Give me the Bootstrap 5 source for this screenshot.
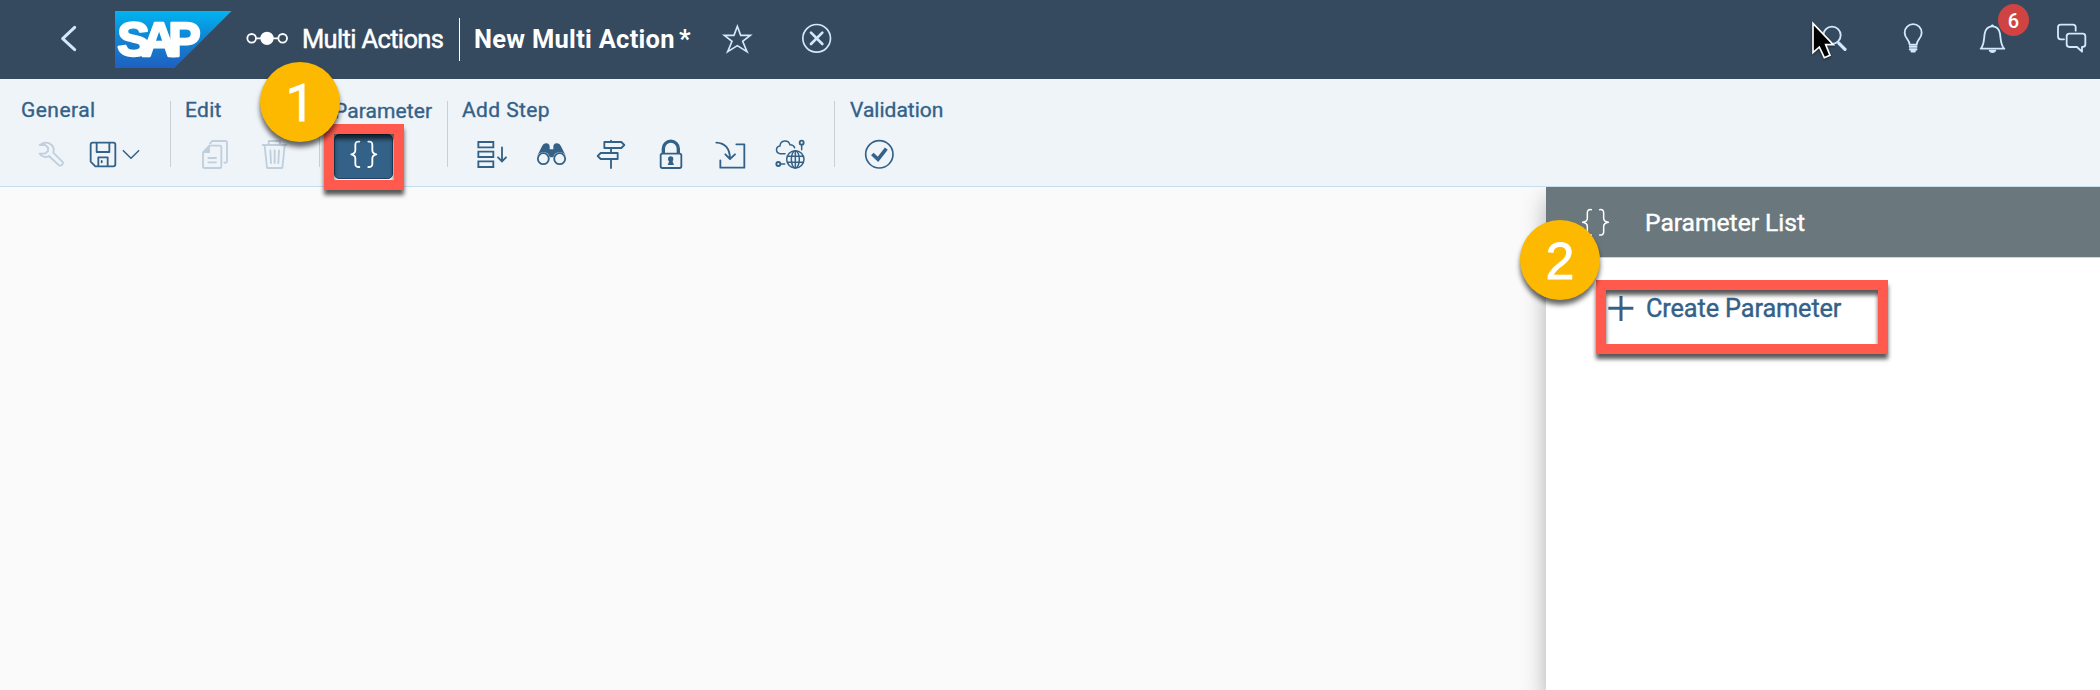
<!DOCTYPE html>
<html lang="en">
<head>
<meta charset="utf-8">
<title>Multi Actions</title>
<link href="https://cdn.jsdelivr.net/npm/bootstrap@5.3.0/dist/css/bootstrap.min.css" rel="stylesheet">
<script src="https://cdn.jsdelivr.net/npm/bootstrap@5.3.0/dist/js/bootstrap.bundle.min.js" defer></script>
<style>
body{font-family:Roboto,"Liberation Sans",sans-serif;background:#fafafa;height:690px;overflow:hidden}
svg{display:block;flex:none;overflow:visible;fill:none;stroke:currentColor;stroke-width:5.5;stroke-linejoin:round;stroke-linecap:round}
.solid{fill:currentColor;stroke:none}
.shell{height:79px;background:#354a5f;color:#d1e8ff;padding:0 14px 0 60px}
.shell-text{font-size:25.5px;line-height:79px;color:#fff;white-space:nowrap;flex:none}
.crumb{width:157px;padding-left:13px;letter-spacing:-.65px;-webkit-text-stroke:.5px #fff}
.title-now{width:247px;padding-left:13px;font-weight:700;letter-spacing:.28px}
.sep{width:1px;height:43px;background:#fff;margin-right:1px}
.logo{margin:0 14px 0 37px}
.tools{height:108px;padding-top:22px;background:#eff4f9;border-bottom:1px solid #c8dcef;color:#346187}
.grp{height:66px;border-right:1px solid #c8cfd6;padding-left:15px;flex:none}
.grp-label{font-size:21px;line-height:18px;height:18px;margin-bottom:16px;white-space:nowrap;-webkit-text-stroke:.35px}
.off{color:#bfcfde}
.work{height:503px;overflow:hidden}
.side{width:554px;background:#fff;box-shadow:0 12px 22px rgba(0,0,0,.3)}
.side-head{height:71px;background:#6a777c;border-bottom:1px solid #c8d6e4;color:#fff;padding-left:36px;flex:none}
.side-title{font-size:24.6px;line-height:72px;margin-left:36px;white-space:nowrap;-webkit-text-stroke:.45px}
.create{color:#346187;font-size:25.3px;line-height:42px;padding:30px 0 0 61px;white-space:nowrap}
.create span{-webkit-text-stroke:.4px;margin-left:12px;letter-spacing:-.12px}
.param-btn{width:59px;height:45px;background:#346187;border:1px solid #1f4668;border-radius:5px;color:#fff;margin:-1px 0 0 0}
.frame{position:absolute;border:10px solid #ff5a4d;filter:drop-shadow(0 5px 2px rgba(0,0,0,.65))}
.frame-a{left:324px;top:124px;width:80px;height:66px}
.frame-b{left:1596px;top:280px;width:292px;height:74px}
.step{position:absolute;width:80px;height:80px;border-radius:50%;background:#fcb900;color:#fff;font:52px/82px "Liberation Sans",sans-serif;text-align:center;-webkit-text-stroke:.8px #fff;box-shadow:0 5px 5px rgba(0,0,0,.6)}
.step-1{left:260px;top:62px;font-family:Roboto,sans-serif;line-height:83px}
.step-2{left:1520px;top:220px}
.count{position:absolute;left:1998px;top:4px;width:31px;height:32px;border-radius:50%;background:#d04343;color:#fff;font-size:20px;line-height:34px;text-align:center;font-weight:500}
.pointer{position:absolute;left:1808px;top:18px}
</style>
</head>
<body class="position-relative">
<header class="shell d-flex align-items-center">
  <svg width="18" height="79" viewBox="180 0 54 237"><path style="stroke-width:9" d="M224 82L188 116L224 149"/></svg>
  <svg class="logo" width="117" height="79" viewBox="345 0 351 237">
    <defs><linearGradient id="sap" x1="0" y1="0" x2="0" y2="1"><stop offset="0" stop-color="#00b5f1"/><stop offset=".4" stop-color="#0d8bd8"/><stop offset="1" stop-color="#2060c0"/></linearGradient></defs>
    <path fill="url(#sap)" stroke="none" d="M345 33H695L523 204H345z"/>
    <text x="352" y="169" textLength="250" style="font:bold 146px 'Liberation Sans',sans-serif;fill:#fff;stroke:#fff;stroke-width:7">SAP</text>
  </svg>
  <svg width="43" height="79" viewBox="738 0 129 237" color="#fff"><circle cx="755" cy="115" r="13"/><circle cx="848" cy="115" r="13"/><path d="M769 115H834"/><circle class="solid" cx="801" cy="115" r="20"/></svg>
  <div class="shell-text crumb ms-0" style="margin-right:13px">Multi Actions</div>
  <div class="sep"></div>
  <div class="shell-text title-now">New Multi Action<span class="ms-1">*</span></div>
  <svg style="margin-left:14px" width="30" height="79" viewBox="846 0 90 237"><path style="stroke-linejoin:miter;stroke-width:5" d="M892 79L902 106H931L908 124L921 155L892 137L863 155L876 124L853 106H882z"/></svg>
  <svg style="margin-left:49px" width="31" height="79" viewBox="1083 0 93 237"><circle cx="1130" cy="115" r="41.500" stroke-width="5"/><path style="stroke-width:8" d="M1113 98L1147 132M1147 98L1113 132"/></svg>
  <div class="ms-auto d-flex">
    <svg width="26" height="79" viewBox="123 0 78 237"><circle cx="156" cy="106" r="26"/><path style="stroke-width:10" d="M177 130L195 148"/></svg>
    <svg style="margin-left:56px" width="20" height="79" viewBox="369 0 60 237"><path d="M389 134C389 119 374 116 374 98A25.500 25.500 0 0 1 425 98C425 116 410 119 410 134z"/><path style="stroke-width:7" d="M390 140H409M390 148H409M395 154H404"/></svg>
    <svg style="margin-left:56px" width="26" height="79" viewBox="597 0 78 237"><path d="M602 146H673C662 137 663 123 660 101C657 84 649 79 637 79S617 84 614 101C611 123 612 137 602 146z"/><path class="solid" d="M626 149H649C647 162 628 162 626 149zM630 80Q637 65 644 80z"/></svg>
    <svg style="margin-left:52px" width="29" height="79" viewBox="831 0 87 237"><path d="M852 118H842Q834 118 834 109V82Q834 74 842 74H879Q887 74 887 82V92M868 101H908Q916 101 916 109V133Q916 141 908 141H906V155L891 141H868Q860 141 860 133V109Q860 101 868 101z"/></svg>
  </div>
</header>

<nav class="tools d-flex align-items-start">
  <section class="grp" style="width:171px;padding-left:22px">
    <div class="grp-label" style="letter-spacing:.45px;text-indent:-1px">General</div>
    <div class="d-flex">
      <svg class="off" width="60" height="40" viewBox="66 405 180 120"><path d="M119 435H135L144 443V453L135 461H119C124 470 137 474 147 468L177 496Q184 499 188 492L189 487L160 458C166 438 148 424 130 429L119 435"/></svg>
      <svg width="60" height="40" viewBox="246 405 180 120"><path d="M278 428H340Q346 428 346 434V493Q346 499 340 499H286L272 485V434Q272 428 278 428zM290 429V456H328V429M295 498V472H323V498"/><path d="M305 483V487"/><path style="stroke-width:4.500" d="M370 452L393 475L416 452"/></svg>
    </div>
  </section>
  <section class="grp" style="width:149px">
    <div class="grp-label" style="letter-spacing:.3px;text-indent:-1px">Edit</div>
    <div class="d-flex off">
      <svg width="60" height="40" viewBox="558 405 180 120"><path d="M628 437H659Q664 437 664 442V499Q664 504 659 504H614Q609 504 609 499V457zM630 430L637 423H676Q681 423 681 428V483Q681 489 673 488M625 474H648M625 487H648"/><path class="solid" d="M609 459L630 436V459z"/></svg>
      <svg width="60" height="40" viewBox="738 405 180 120"><path d="M788 435H859M806 433V423H840V433M794 438L801 504H847L854 438M811 451L813 489M824 451V489M837 451L835 489"/></svg>
    </div>
  </section>
  <section class="grp" style="width:128px;padding-left:14px">
    <div class="grp-label position-relative" style="top:1px;letter-spacing:.1px">Parameter</div>
    <div class="param-btn ms-0"><svg style="margin:-1px 0 0 -1px" width="60" height="44" viewBox="1002 402 180 132"><path d="M1078 425Q1066 423 1066 435V451Q1066 461 1054 463Q1066 466 1066 475V491Q1066 502 1078 501M1105 425Q1117 423 1117 435V451Q1117 461 1129 463Q1117 466 1117 475V491Q1117 502 1105 501"/></svg></div>
  </section>
  <section class="grp" style="width:387px;padding-left:14px">
    <div class="grp-label" style="letter-spacing:.4px">Add Step</div>
    <div class="d-flex">
      <svg width="60" height="40" viewBox="66 405 180 120"><path style="stroke-linejoin:miter" d="M115 426H160V442H115zM115 455H160V471H115zM115 484H160V501H115zM186 442V484M174 472L186 484L198 472"/></svg>
      <svg width="60" height="40" viewBox="246 405 180 120"><circle cx="310" cy="476" r="16.500"/><circle cx="359" cy="476" r="16.500"/><path class="solid" d="M291 469L306 439Q310 429 319 430Q329 431 329 440V448H340V440Q340 431 350 430Q359 429 363 439L378 469Q372 457 359 457Q343 457 340 472H329Q326 457 310 457Q297 457 291 469z"/></svg>
      <svg width="60" height="40" viewBox="426 405 180 120"><path d="M493 426H544L553 435L544 444H493zM533 459H482L473 468L482 477H533zM513 422V425M513 446V458M513 479V504"/></svg>
      <svg width="60" height="40" viewBox="606 405 180 120"><rect x="662" y="461" width="62" height="43" rx="5"/><path style="stroke-width:10;stroke-linecap:butt" d="M670 460V446A22.500 22.500 0 0 1 715 446V460"/><circle class="solid" cx="692" cy="477" r="8"/><path class="solid" d="M689 480H696L702 495H683z"/></svg>
      <svg width="60" height="40" viewBox="786 405 180 120"><path d="M829 428Q869 430 870 476M856 463L870 477L885 463M889 433H913V503H841V481"/></svg>
      <svg width="60" height="40" viewBox="966 405 180 120"><path style="stroke-width:4.500" d="M1035 461H1020C1006 459 1006 440 1020 438C1021 419 1045 418 1050 434Q1061 434 1064 443M1085 435V449M1022 492H1034"/><circle cx="1085" cy="428" r="6"/><circle cx="1015" cy="492" r="6"/><g style="stroke-width:4.500"><circle cx="1066" cy="478" r="26"/><ellipse cx="1066" cy="478" rx="12" ry="26"/><path d="M1066 452V504M1043 469H1089M1043 487H1089"/></g></svg>
    </div>
  </section>
  <section class="grp border-0">
    <div class="grp-label">Validation</div>
    <svg width="60" height="40" viewBox="1230 405 180 120"><circle cx="1318" cy="463" r="41" stroke-width="5"/><path style="stroke-width:11;stroke-linecap:butt;stroke-linejoin:miter" d="M1297 462L1314 478L1339 446"/></svg>
  </section>
</nav>

<main class="work d-flex">
  <section class="flex-grow-1"></section>
  <aside class="side d-flex flex-column">
    <div class="side-head d-flex">
      <svg width="27" height="71" viewBox="246 51 81 213"><path style="stroke-width:4.500" d="M274 119Q262 117 262 129V145Q262 155 248 157Q262 160 262 169V185Q262 196 274 195M299 119Q311 117 311 129V145Q311 155 325 157Q311 160 311 169V185Q311 196 299 195"/></svg>
      <div class="side-title">Parameter List</div>
    </div>
    <div class="create d-flex">
      <svg width="27" height="40" viewBox="321 354 81 120"><path style="stroke-width:9;stroke-linecap:butt" d="M325 415H400M363 378V453"/></svg>
      <span>Create Parameter</span>
    </div>
  </aside>
</main>

<span class="count">6</span>
<svg class="pointer" width="32" height="48" viewBox="84 54 96 144"><path style="fill:#000;stroke:#fff;stroke-width:5;stroke-linejoin:miter;filter:drop-shadow(0 3px 3px rgba(0,0,0,.5))" d="M99 70V158L118 141L133 173L150 166L137 134H160z"/></svg>
<div class="frame frame-a"></div>
<div class="frame frame-b"></div>
<div class="step step-1">1</div>
<div class="step step-2">2</div>
</body>
</html>
